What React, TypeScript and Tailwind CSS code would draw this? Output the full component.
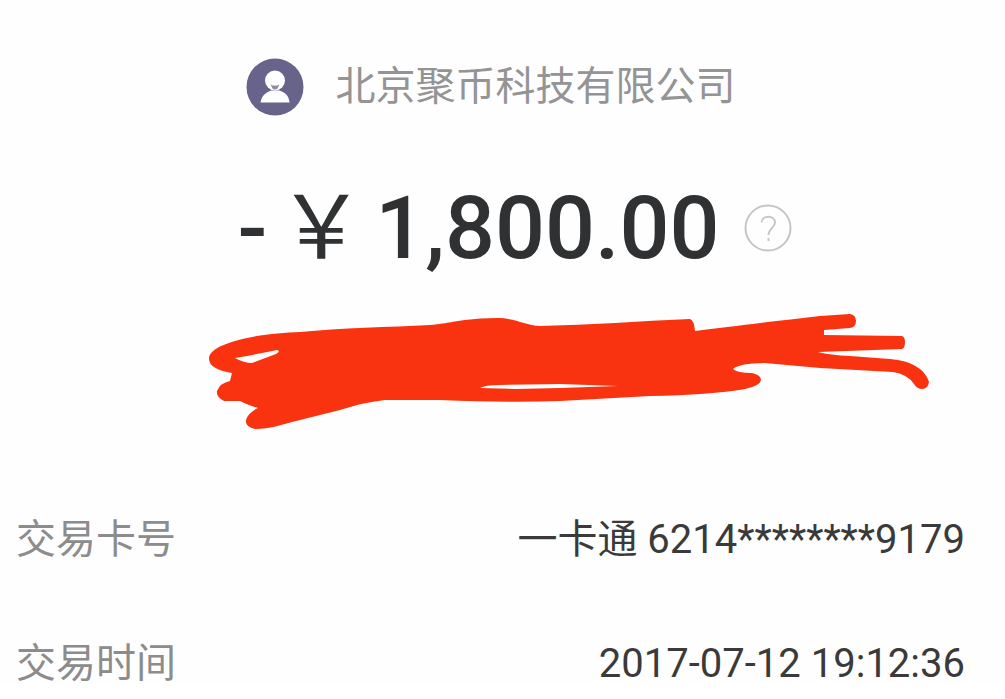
const details = [
  { label: '交易卡号', value: '一卡通 6214********9179' },
  { label: '交易时间', value: '2017-07-12 19:12:36' },
];

function PayeeIcon() {
  return (
    <svg viewBox="0 0 58 58" className="size-[58px] shrink-0" aria-hidden="true">
      <circle cx="29" cy="29" r="28.5" fill="#67638a" />
      <circle cx="29" cy="22.5" r="10" fill="#fff" />
      <path d="M14.5 44.5C15.5 37 21 34 25 32.5h8.5C38 34 43 37 43.5 44.5Z" fill="#fff" />
      <path d="M24.5 26.5Q29 29 33.5 26.5L31.5 30.5Q29 32.5 26.5 30.5Z" fill="#8f8b9c" />
    </svg>
  );
}

function HelpIcon() {
  return (
    <svg viewBox="0 0 48 48" className="size-12" fill="none" stroke="#c6c6c6" aria-hidden="true">
      <circle cx="24" cy="24" r="22.5" strokeWidth="2" />
      <path d="M17.5 18.5C18 10.5 31 11 31 18.5C31 23.5 24.5 24.5 24.5 31" strokeWidth="2" />
      <path d="M24.5 34v3" strokeWidth="2" />
    </svg>
  );
}

function Scribble() {
  return (
    <svg viewBox="0 300 1005 150" className="mt-7 block w-full" aria-hidden="true">
      <path
        fill="#f9320f"
        fillRule="evenodd"
        d="M209 359C209 350 222 345 235 341C260 334 280 333 300 332C340 328 390 327 430 325C450 323 455 321 465 320Q480 318 497 318C515 318 525 325 540 326C590 325 640 321 690 319Q694 320 695 331C730 327 775 321 820 316L850 314Q856 315 856 321Q856 327 850 328L824 330V335L902 336Q905 337 905 342Q905 348 902 349L818 352Q830 355 850 356L890 359C912 361 925 369 929 382Q928 389 922 389Q917 389 914 384Q907 374 893 372L820 368L765 363Q740 363 733 369Q737 373 752 373Q761 375 761 380Q760 386 745 389Q710 395 650 396L560 401Q510 403 440 400L385 400Q365 402 340 410L300 420C280 425 270 429 255 429Q245 427 246 420Q248 413 258 408Q247 405 240 401H224Q216 397 217 391Q220 383 230 381L232 373Q209 369 209 359ZM235 358Q258 354 277 350Q281 351 276 354L252 363Q244 363 235 358ZM480 388Q485 385 500 385L560 384L618 386L560 388L515 389Z"
      />
    </svg>
  );
}

export default function App() {
  return (
    <main className="bg-[#fefefe] pt-[58px] font-['Roboto','Noto_Sans_CJK_SC',sans-serif] text-[#2f3133]">
      <div className="flex items-center justify-center gap-8 pr-6">
        <PayeeIcon />
        <h1 className="text-[40px] leading-[58px] text-[#949494]">北京聚币科技有限公司</h1>
      </div>

      <div className="mt-[68px] flex items-center justify-center gap-6 pl-6">
        <p className="flex items-center gap-[10px] text-[88px] leading-[88px] font-medium">
          <span>-</span>
          <span className="font-normal">￥</span>
          <span>1,800.00</span>
        </p>
        <button type="button" aria-label="帮助">
          <HelpIcon />
        </button>
      </div>

      <Scribble />

      <dl className="mt-[70px] flex flex-col gap-[84px] pr-10 pl-4 text-[40px] leading-10">
        {details.map((item) => (
          <div key={item.label} className="flex justify-between">
            <dt className="text-[#8c8c8c]">{item.label}</dt>
            <dd className="text-[#3a3a3a]">{item.value}</dd>
          </div>
        ))}
      </dl>
    </main>
  );
}
